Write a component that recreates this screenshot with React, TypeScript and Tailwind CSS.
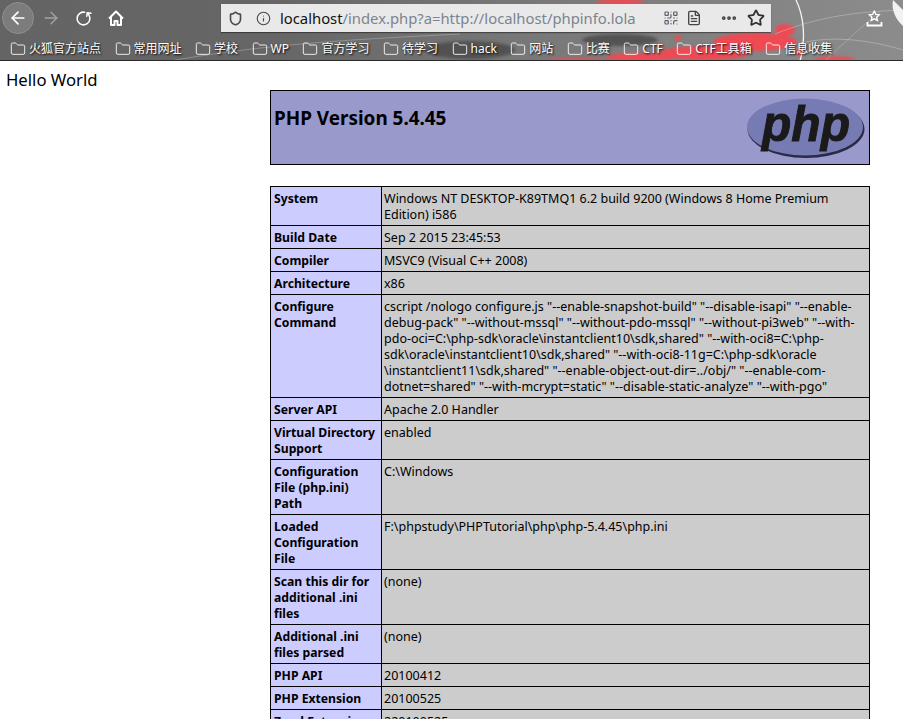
import { ArrowLeft, ArrowRight, RotateCw, Shield, Info, QrCode, FileText, Star, Folder, Ellipsis } from "lucide-react";

const bookmarks = ["火狐官方站点", "常用网址", "学校", "WP", "官方学习", "待学习", "hack", "网站", "比赛", "CTF", "CTF工具箱", "信息收集"];

const rows: { label: string[]; value: string[] }[] = [
  { label: ["System"], value: ["Windows NT DESKTOP-K89TMQ1 6.2 build 9200 (Windows 8 Home Premium", "Edition) i586"] },
  { label: ["Build Date"], value: ["Sep 2 2015 23:45:53"] },
  { label: ["Compiler"], value: ["MSVC9 (Visual C++ 2008)"] },
  { label: ["Architecture"], value: ["x86"] },
  {
    label: ["Configure", "Command"],
    value: [
      'cscript /nologo configure.js "--enable-snapshot-build" "--disable-isapi" "--enable-',
      'debug-pack" "--without-mssql" "--without-pdo-mssql" "--without-pi3web" "--with-',
      "pdo-oci=C:\\php-sdk\\oracle\\instantclient10\\sdk,shared\" \"--with-oci8=C:\\php-",
      'sdk\\oracle\\instantclient10\\sdk,shared" "--with-oci8-11g=C:\\php-sdk\\oracle',
      '\\instantclient11\\sdk,shared" "--enable-object-out-dir=../obj/" "--enable-com-',
      'dotnet=shared" "--with-mcrypt=static" "--disable-static-analyze" "--with-pgo"',
    ],
  },
  { label: ["Server API"], value: ["Apache 2.0 Handler"] },
  { label: ["Virtual Directory", "Support"], value: ["enabled"] },
  { label: ["Configuration", "File (php.ini)", "Path"], value: ["C:\\Windows"] },
  { label: ["Loaded", "Configuration", "File"], value: ["F:\\phpstudy\\PHPTutorial\\php\\php-5.4.45\\php.ini"] },
  { label: ["Scan this dir for", "additional .ini", "files"], value: ["(none)"] },
  { label: ["Additional .ini", "files parsed"], value: ["(none)"] },
  { label: ["PHP API"], value: ["20100412"] },
  { label: ["PHP Extension"], value: ["20100525"] },
  { label: ["Zend Extension"], value: ["220100525"] },
];

const Lines = ({ lines }: { lines: string[] }) => (
  <>
    {lines.map((l) => (
      <div key={l} className="whitespace-nowrap">
        {l}
      </div>
    ))}
  </>
);

const ChromeBackdrop = () => (
  <svg className="absolute inset-0" width="903" height="61" viewBox="0 0 903 61">
    <defs>
      <filter id="soft">
        <feGaussianBlur stdDeviation="1.4" />
      </filter>
      <linearGradient id="base" x1="0" x2="1" y1="0" y2="0">
        <stop offset="0" stopColor="#646464" />
        <stop offset="0.3" stopColor="#666666" />
        <stop offset="0.55" stopColor="#767676" />
        <stop offset="0.8" stopColor="#828282" />
        <stop offset="1" stopColor="#8c8c8c" />
      </linearGradient>
    </defs>
    <rect width="903" height="61" fill="url(#base)" />
    <g filter="url(#soft)" fill="#4a4a4a" opacity="0.8">
      <ellipse cx="470" cy="50" rx="45" ry="9" />
      <ellipse cx="620" cy="40" rx="38" ry="6" />
    </g>
    <g filter="url(#soft)" fill="#ef4a52">
      <ellipse cx="755" cy="42" rx="42" ry="9" />
      <ellipse cx="705" cy="53" rx="45" ry="7" />
      <ellipse cx="640" cy="57" rx="35" ry="4" />
      <ellipse cx="785" cy="30" rx="10" ry="6" />
      <ellipse cx="620" cy="2" rx="24" ry="3" />
      <ellipse cx="835" cy="59" rx="20" ry="2.5" />
      <ellipse cx="575" cy="60" rx="28" ry="2" />
      <circle cx="678" cy="38" r="3" />
      <circle cx="660" cy="46" r="2.5" />
      <circle cx="800" cy="52" r="4" />
    </g>
    <g fill="none" stroke="#d8d8d8">
      <path d="M170 61 C260 45 340 40 460 34" strokeWidth="0.7" opacity="0.5" />
      <path d="M796 0 C804 16 806 40 800 61" stroke="#f4f4f4" strokeWidth="1.3" />
      <path d="M775 34 C815 18 850 12 903 10" strokeWidth="0.8" opacity="0.5" />
      <path d="M806 42 C835 36 870 40 903 50" strokeWidth="0.8" opacity="0.5" />
      <path d="M825 61 C845 42 860 28 880 12" strokeWidth="0.8" opacity="0.4" />
    </g>
    <path d="M893 0 L903 10 L903 26 C896 20 891 10 893 0Z" fill="#f2f2f2" />
    <rect y="60" width="903" height="1" fill="#2a2a2a" />
  </svg>
);

const PhpLogo = () => (
  <svg width="120" height="62" viewBox="0 0 120 62">
    <ellipse cx="60" cy="32" rx="58.5" ry="29" fill="#2a2a44" />
    <ellipse cx="59" cy="30" rx="58" ry="28.5" fill="#777bb4" />
    <text x="16" y="44" fill="#1a1a1a" stroke="#1a1a1a" strokeWidth="1" fontFamily="'Liberation Sans', sans-serif" fontStyle="italic" fontWeight="700" fontSize="50" textLength="88" lengthAdjust="spacingAndGlyphs">
      php
    </text>
  </svg>
);

export default function App() {
  return (
    <div className="h-[719px] w-[903px] overflow-hidden bg-white font-['Noto_Sans','Noto_Sans_CJK_SC',sans-serif] text-black">
      <div className="relative h-[61px]">
        <ChromeBackdrop />
        <div className="relative flex h-[36px] items-center">
          <div className="ml-[2px] flex h-[32px] w-[32px] items-center justify-center rounded-full border border-[#8f8f8f] bg-[#7c7c7c]">
            <ArrowLeft size={20} strokeWidth={2} className="text-white" />
          </div>
          <ArrowRight size={20} strokeWidth={1.6} className="ml-[7px] text-[#a3a3a3]" />
          <RotateCw size={17} strokeWidth={2.2} className="ml-[14px] -scale-x-100 rotate-[100deg] text-white" />
          <svg className="ml-[15px]" width="18" height="18" viewBox="0 0 18 18" fill="none" stroke="#fff" strokeWidth="2">
            <path d="M2 9.5 9 2.5l7 7" strokeLinejoin="round" />
            <path d="M4 8v8h3.5v-4h3v4H14V8" strokeLinejoin="round" />
          </svg>
          <div className="ml-[96px] flex h-[28px] w-[550px] items-center bg-[#e9e9e9] shadow-[0_1px_1px_rgba(0,0,0,0.4)]">
            <Shield size={15} strokeWidth={2.6} className="ml-[7px] text-[#4a4a4a]" />
            <Info size={15} strokeWidth={1.8} className="ml-[13px] text-[#4a4a4a]" />
            <span className="ml-[9px] whitespace-nowrap text-[14.8px] leading-none text-[#7b8490]">
              <span className="text-[#111]">localhost</span>/index.php?a=http://localhost/phpinfo.lola
            </span>
            <QrCode size={16} strokeWidth={1.8} className="ml-auto text-[#5a5f6b]" />
            <FileText size={16} strokeWidth={2} className="ml-[7px] text-[#444]" />
            <Ellipsis size={18} strokeWidth={3} className="ml-[18px] text-[#444]" />
            <Star size={18} strokeWidth={2.4} className="ml-[9px] mr-[6px] text-[#333]" />
          </div>
          <svg className="ml-[95px]" width="17" height="17" viewBox="0 0 17 17" fill="none" stroke="#fff" strokeWidth="1.8">
            <path d="M8.5 1.5l2 4 4 .5-3 3 .8 4-3.8-2-3.8 2 .8-4-3-3 4-.5z" transform="translate(1.5 0) scale(.8)" />
            <path d="M1.5 12v3.5h14V12" />
          </svg>
        </div>
        <div className="relative flex h-[24px] items-center gap-[13.5px] pl-[10px] pt-[1px]">
          {bookmarks.map((b) => (
            <div key={b} className="flex items-center gap-[3px] whitespace-nowrap text-[12px] leading-none text-white [text-shadow:1px_1px_2px_#000]">
              <Folder size={16} strokeWidth={1.3} className="text-white" />
              <span>{b}</span>
            </div>
          ))}
        </div>
      </div>

      <div className="relative">
        <p className="absolute left-[6px] top-[8px] text-[16.7px] leading-[22px]">Hello World</p>
        <div className="ml-[270px] w-[600px] pt-[29px]">
          <div className="flex h-[75px] justify-between border border-black bg-[#9999cc] pl-[3px] pr-[3px]">
            <h1 className="mt-[14px] text-[18.9px] font-bold leading-[26px]">PHP Version 5.4.45</h1>
            <div className="mt-[6px]">
              <PhpLogo />
            </div>
          </div>
          <table className="mt-[21px] w-[600px] table-fixed border-collapse text-[12.5px] leading-[16px]">
            <tbody>
              {rows.map((r) => (
                <tr key={r.label[0]}>
                  <td className="w-[111px] border border-black bg-[#ccccff] px-[3px] pb-[2px] pt-[4px] align-top text-[12.2px] font-bold">
                    <Lines lines={r.label} />
                  </td>
                  <td className="border border-black bg-[#cccccc] pb-[2px] pl-[2px] pr-[3px] pt-[4px] align-top">
                    <Lines lines={r.value} />
                  </td>
                </tr>
              ))}
            </tbody>
          </table>
        </div>
      </div>
    </div>
  );
}
